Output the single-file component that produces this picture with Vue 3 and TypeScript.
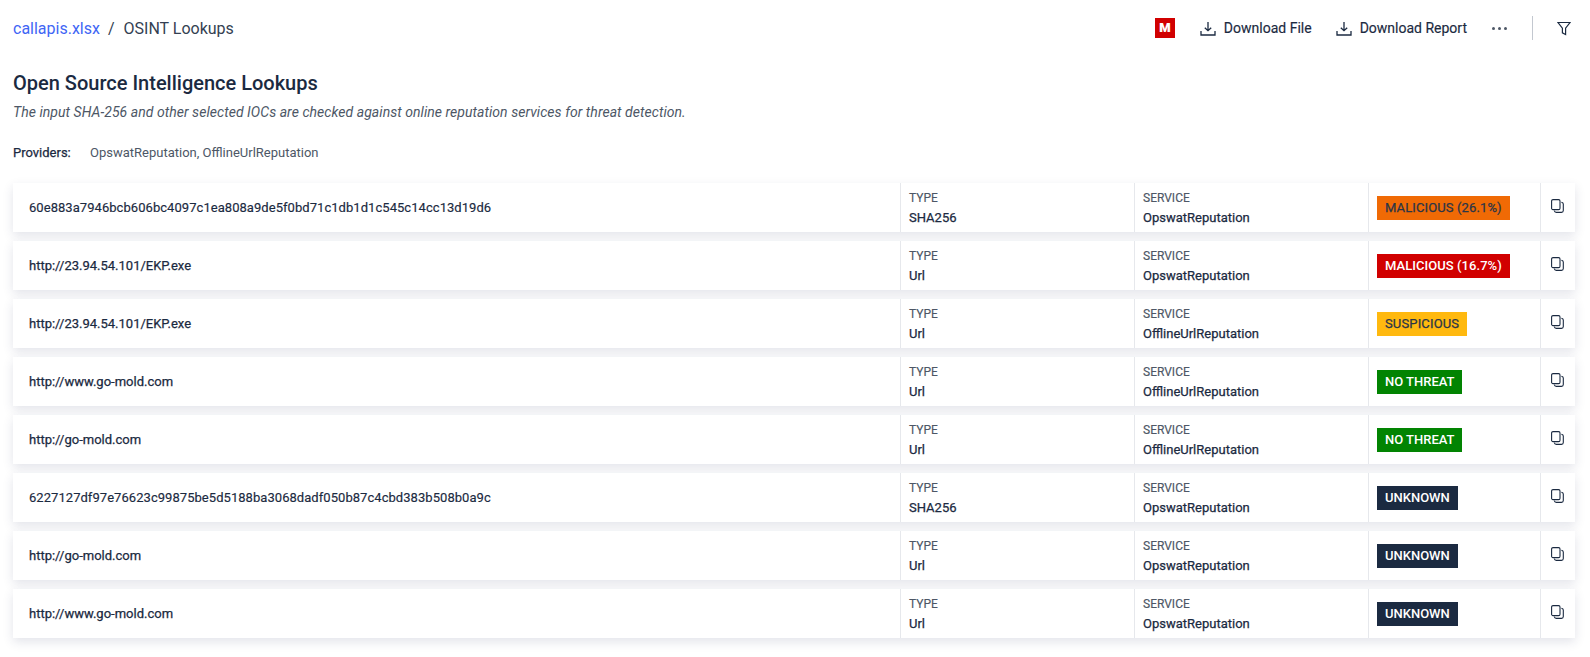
<script setup lang="ts">
interface Row { ioc: string; type: string; service: string; label: string; cls: string; mono?: boolean }
const rows: Row[] = [
  { ioc: '60e883a7946bcb606bc4097c1ea808a9de5f0bd71c1db1d1c545c14cc13d19d6', type: 'SHA256', service: 'OpswatReputation', label: 'MALICIOUS (26.1%)', cls: 'orange', mono: true },
  { ioc: 'http://23.94.54.101/EKP.exe', type: 'Url', service: 'OpswatReputation', label: 'MALICIOUS (16.7%)', cls: 'red' },
  { ioc: 'http://23.94.54.101/EKP.exe', type: 'Url', service: 'OfflineUrlReputation', label: 'SUSPICIOUS', cls: 'yellow' },
  { ioc: 'http://www.go-mold.com', type: 'Url', service: 'OfflineUrlReputation', label: 'NO THREAT', cls: 'green' },
  { ioc: 'http://go-mold.com', type: 'Url', service: 'OfflineUrlReputation', label: 'NO THREAT', cls: 'green' },
  { ioc: '6227127df97e76623c99875be5d5188ba3068dadf050b87c4cbd383b508b0a9c', type: 'SHA256', service: 'OpswatReputation', label: 'UNKNOWN', cls: 'navy', mono: true },
  { ioc: 'http://go-mold.com', type: 'Url', service: 'OpswatReputation', label: 'UNKNOWN', cls: 'navy' },
  { ioc: 'http://www.go-mold.com', type: 'Url', service: 'OpswatReputation', label: 'UNKNOWN', cls: 'navy' },
]
</script>

<template>
  <div class="page">
    <header class="topbar">
      <div class="crumbs">
        <a class="link">callapis.xlsx</a>
        <span class="slash">/</span>
        <span>OSINT Lookups</span>
      </div>
      <div class="actions">
        <span class="mark">M</span>
        <button class="btn first">
          <svg width="16" height="16" viewBox="0 0 16 16" fill="none" stroke="#1b2a41" stroke-width="1.3"><path d="M8 2v8.7M4.8 7.7 8 10.7l3.2-3M1 11v4h14v-4" /></svg>
          Download File
        </button>
        <button class="btn second">
          <svg width="16" height="16" viewBox="0 0 16 16" fill="none" stroke="#1b2a41" stroke-width="1.3"><path d="M8 2v8.7M4.8 7.7 8 10.7l3.2-3M1 11v4h14v-4" /></svg>
          Download Report
        </button>
        <span class="dots"><i></i><i></i><i></i></span>
        <span class="divider"></span>
        <svg class="filter" width="14" height="15" viewBox="0 0 14 15" fill="none" stroke="#1b2a41" stroke-width="1.2"><path d="M1 1.5h12L8.6 7.2v6.3l-3.2-1.6V7.2z" /></svg>
      </div>
    </header>

    <h1>Open Source Intelligence Lookups</h1>
    <p class="sub">The input SHA-256 and other selected IOCs are checked against online reputation services for threat detection.</p>
    <div class="providers"><b>Providers:</b><span>OpswatReputation, OfflineUrlReputation</span></div>

    <div class="list">
      <div v-for="(r, i) in rows" :key="i" class="row">
        <div class="cell ioc" :class="{ hash: r.mono }">{{ r.ioc }}</div>
        <div class="cell meta"><small>TYPE</small><span>{{ r.type }}</span></div>
        <div class="cell meta"><small>SERVICE</small><span>{{ r.service }}</span></div>
        <div class="cell verdict"><span class="badge" :class="r.cls">{{ r.label }}</span></div>
        <div class="cell copy">
          <svg width="13" height="14" viewBox="0 0 13 14" fill="none" stroke="#1b2a41" stroke-width="1.1"><rect x="0.6" y="0.6" width="8.4" height="10" rx="1.4" /><path d="M10.4 3.2c1 .2 1.9.8 1.9 1.8v6.6c0 1-.7 1.8-1.8 1.8H5.2c-1 0-1.7-.7-1.9-1.7" /></svg>
        </div>
      </div>
    </div>
  </div>
</template>

<style>
html, body { background: #fff; }
</style>

<style scoped>
.page { box-sizing: border-box; width: 1590px; height: 657px; padding: 0 15px 0 13px; font-family: Roboto, "Liberation Sans", sans-serif; color: #1b2a41; overflow: hidden; }
.topbar { display: flex; justify-content: space-between; align-items: center; height: 57px; }
.crumbs { display: flex; gap: 8px; font-size: 16px; color: #343f52; }
.slash { margin-right: 1px; }
.link { color: #3f66f5; }
.actions { display: flex; align-items: center; font-size: 14px; font-weight: 400; -webkit-text-stroke: 0.15px; line-height: 16px; margin-top: -1px; }
.mark { width: 20px; height: 20px; background: #d10000; color: #fff; font-weight: 900; font-size: 13px; display: flex; align-items: center; justify-content: center; }
.btn { display: flex; align-items: center; gap: 8px; border: 0; background: none; padding: 0; font: inherit; color: inherit; }
.first { margin-left: 25px; }
.second { margin-left: 24px; }
.dots { display: flex; gap: 3px; margin-left: 25px; }
.dots i { width: 3px; height: 3px; border-radius: 50%; background: #4d5766; }
.divider { width: 1px; height: 24px; background: #c3c8d0; margin-left: 25px; }
.filter { margin-left: 24px; margin-right: 4px; }
h1 { margin: 14px 0 0; font-size: 20px; line-height: 24px; font-weight: 500; color: #1b2a41; }
.sub { margin: 7px 0 0; font-size: 14px; line-height: 20px; font-style: italic; color: #4d5766; letter-spacing: 0.05px; }
.providers { display: flex; margin-top: 23px; font-size: 13px; line-height: 16px; color: #4d5766; }
.providers b { width: 77px; font-weight: 400; -webkit-text-stroke: 0.25px; color: #1b2a41; }
.list { display: flex; flex-direction: column; gap: 9px; margin-top: 22px; }
.row { display: grid; grid-template-columns: 887px 234px 234px 172px 33px; height: 49px; background: #fff; box-shadow: 0 4px 10px rgba(40, 50, 90, 0.13); }
.cell { box-sizing: border-box; border-left: 1px solid #e6e8ec; display: flex; }
.ioc { border-left: 0; align-items: center; padding-left: 16px; font-size: 13px; font-weight: 400; -webkit-text-stroke: 0.25px; }
.hash { letter-spacing: 0.05px; -webkit-text-stroke: 0.15px; }
.meta { flex-direction: column; justify-content: center; gap: 4px; padding-left: 8px; font-size: 13px; font-weight: 400; line-height: 16px; -webkit-text-stroke: 0.25px; }
.meta small { font-size: 12px; font-weight: 400; color: #4d5766; -webkit-text-stroke: 0.15px; }
.verdict { align-items: center; padding-left: 8px; }
.badge { height: 24px; line-height: 24px; padding: 0 8px; font-size: 13px; font-weight: 500; }
.orange { background: #f06a05; color: #2a3548; font-weight: 400; -webkit-text-stroke: 0.25px; letter-spacing: 0.12px; }
.red { background: #d10000; color: #fff; letter-spacing: 0.05px; }
.yellow { background: #ffb90f; color: #2a3548; font-weight: 400; -webkit-text-stroke: 0.25px; letter-spacing: 0.15px; }
.green { background: #028402; color: #fff; padding-right: 7px; }
.navy { background: #1b2a41; color: #fff; }
.copy { justify-content: center; padding-top: 16px; }
</style>
